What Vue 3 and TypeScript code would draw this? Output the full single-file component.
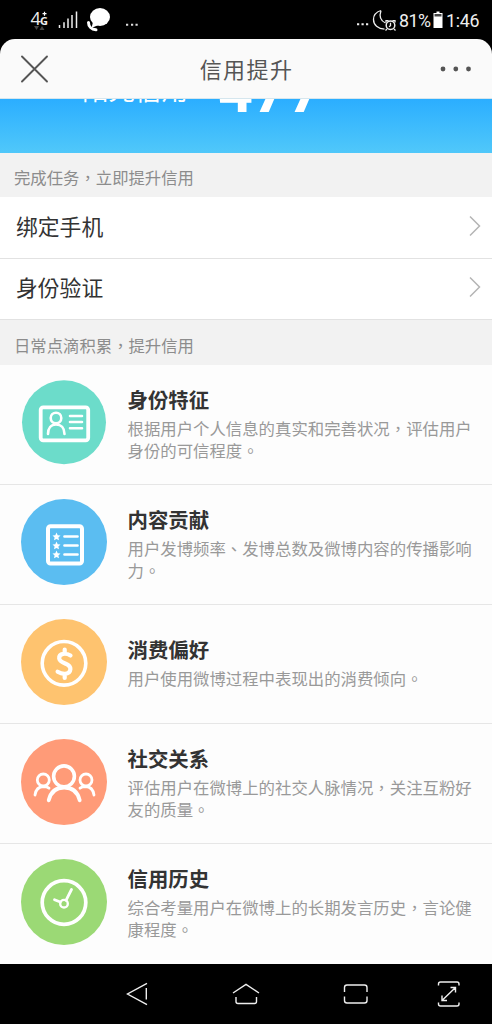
<script setup lang="ts">
interface Factor {
  kind: 'identity' | 'content' | 'spend' | 'social' | 'history'
  title: string
  desc: string
}

const tasks: string[] = ['绑定手机', '身份验证']

const factors: Factor[] = [
  { kind: 'identity', title: '身份特征', desc: '根据用户个人信息的真实和完善状况，评估用户身份的可信程度。' },
  { kind: 'content', title: '内容贡献', desc: '用户发博频率、发博总数及微博内容的传播影响力。' },
  { kind: 'spend', title: '消费偏好', desc: '用户使用微博过程中表现出的消费倾向。' },
  { kind: 'social', title: '社交关系', desc: '评估用户在微博上的社交人脉情况，关注互粉好友的质量。' },
  { kind: 'history', title: '信用历史', desc: '综合考量用户在微博上的长期发言历史，言论健康程度。' },
]
</script>

<template>
  <div class="phone">
    <div class="status">
      <svg class="status-left" width="150" height="40" viewBox="0 0 150 40" fill="none">
        <text x="30.5" y="24.5" class="net">4</text>
        <text x="40" y="24.5" class="net-g">G</text>
        <path d="M42.5 13.7h4M44.5 11.7v4" stroke="#fff" stroke-width="1.2" />
        <path d="M34 26h5l-2.500 4zM39.500 30h5l-2.500-4z" fill="#444" />
        <path d="M59.500 25v3M64 22.300v5.700M68 18.500V28M72 15v13M76.500 11.500V28" stroke="#eee" stroke-width="1.5" />
        <ellipse cx="100" cy="17" rx="10" ry="9" fill="#fff" />
        <path d="M93 22l-1.500 6 7-3z" fill="#fff" />
        <path d="M88.500 22.500c0 4 3 7 7.500 7.300" stroke="#fff" stroke-width="3" stroke-linecap="round" />
        <path d="M126 24.800h2.200M131 24.800h2.200M135.500 24.800h2.200" stroke="#ddd" stroke-width="2" />
      </svg>
      <div class="status-right">
        <svg width="44" height="40" viewBox="0 0 44 40" fill="none" stroke="#eee">
          <path d="M2 24.300h2.200M6.500 24.300h2.200M11 24.300h2.200" stroke-width="2" />
          <path d="M26 10.500c-5 1.500-7.500 5-7.500 9 0 5.500 4.500 9.300 11 9.700M26 10.500c-2 6 0 10.500 4.500 12.500" stroke-width="1.300" />
          <circle cx="35.500" cy="25.300" r="4.300" stroke-width="1.500" />
          <path d="M35.500 22.700v3l-1.500 1M31 22.500v-1.800h2.500M40 22.500v-1.800h-2.500M32 29l-1.500 1.500M39 29l1.500 1.500" stroke-width="1.300" />
        </svg>
        <span class="pct">81%</span>
        <svg class="battery" width="10" height="40" viewBox="0 0 10 40">
          <path d="M3.500 11.500h3v1.500H9.500V28H.5V13h3z" fill="#fff" />
          <path d="M1.500 14h7v2.500h-7z" fill="#444" />
        </svg>
        <span class="time">1:46</span>
      </div>
    </div>

    <header class="bar">
      <svg class="close" width="30" height="30" viewBox="0 0 30 30" fill="none" stroke="#555" stroke-width="1.900" stroke-linecap="round">
        <path d="M2 2.500L27 27.500M27 2.500L2 27.500" />
      </svg>
      <h1>信用提升</h1>
      <svg class="more" width="32" height="6" viewBox="0 0 32 6" fill="#555">
        <circle cx="3" cy="3" r="2.400" /><circle cx="15.800" cy="3" r="2.400" /><circle cx="28.500" cy="3" r="2.400" />
      </svg>
    </header>

    <section class="score">
      <span class="score-name">阳光信用</span>
      <span class="score-value">477</span>
    </section>

    <h2 class="label">完成任务，立即提升信用</h2>
    <div v-for="task in tasks" :key="task" class="task">
      <span>{{ task }}</span>
      <svg width="12" height="22" viewBox="0 0 12 22" fill="none" stroke="#b5b5b5" stroke-width="1.500">
        <path d="M1 1.500L10.500 11L1 20.500" />
      </svg>
    </div>
    <h2 class="label second">日常点滴积累，提升信用</h2>

    <article v-for="factor in factors" :key="factor.kind" class="factor" :class="factor.kind">
      <svg class="icon" width="86" height="86" viewBox="0 0 86 86" fill="none" stroke="#fff" stroke-linecap="round">
        <template v-if="factor.kind === 'identity'">
          <circle class="disc" cx="43" cy="43.300" r="42" />
          <rect x="19.700" y="28.300" width="47.500" height="33" rx="2.500" stroke-width="3.800" />
          <circle cx="35" cy="39" r="5.300" stroke-width="2.600" />
          <path d="M27 55c0-6 3-9.500 8-9.500s8.500 3.500 8.500 9.500M49 37h12M49 43h12M49 49.200h12" stroke-width="2.600" />
        </template>
        <template v-else-if="factor.kind === 'content'">
          <circle class="disc" cx="43" cy="43" r="43" />
          <rect x="27" y="27.200" width="34" height="37.300" rx="2.500" stroke-width="4" />
          <path d="M43.500 37.500h13M43.500 46.500h13M43.500 55.500h13" stroke-width="2.700" />
          <path v-for="y in [37.500, 46.500, 55.500]" :key="y" class="star" :transform="`translate(35.500 ${y})`" d="M0-4L1.200-1.300 4-1 1.900 1 2.500 3.800 0 2.400-2.500 3.800-1.900 1-4-1-1.200-1.300z" />
        </template>
        <template v-else-if="factor.kind === 'spend'">
          <circle class="disc" cx="43" cy="43" r="43" />
          <circle cx="43" cy="44.300" r="21.800" stroke-width="3.600" />
          <path d="M49.500 36.500c-2.500-1.500-5-2-7.300-1.600-2.700.5-4.200 2.300-4 4.500.3 3 3.300 4 6 5.100 3.200 1.300 5.400 2.700 5.200 5.700-.2 2.800-2.300 4.500-5.500 4.600-2.800.1-5-.7-7.300-2.100M43.700 30.500v4M43.700 55v4" stroke-width="4.200" />
        </template>
        <template v-else-if="factor.kind === 'social'">
          <circle class="disc" cx="43" cy="43" r="43" />
          <circle cx="43" cy="37.300" r="10.400" stroke-width="3.600" />
          <path d="M27.700 61.300c2-8.300 7.500-12.800 15.500-12.800s13.500 4.500 15.500 12.800" stroke-width="3.800" />
          <circle cx="22.300" cy="41" r="6" stroke-width="2.800" />
          <circle cx="65" cy="41" r="6" stroke-width="2.800" />
          <path d="M14 56c.7-5 3.500-8.300 8.500-8.500 2.300 0 4 .5 5.500 1.700M73 56c-.7-5-3.500-8.300-8.500-8.500-2.300 0-4 .5-5.500 1.700" stroke-width="2.800" />
        </template>
        <template v-else>
          <circle class="disc" cx="43" cy="43" r="43" />
          <circle cx="43" cy="43.500" r="21.800" stroke-width="3.700" />
          <circle cx="43" cy="44.700" r="3.800" stroke-width="2.400" />
          <path d="M45 41.300L50.500 30.500M39.300 43L33.500 40.700" stroke-width="2.800" />
        </template>
      </svg>
      <div class="copy">
        <h3>{{ factor.title }}</h3>
        <p>{{ factor.desc }}</p>
      </div>
    </article>

    <nav class="nav">
      <svg width="492" height="60" viewBox="0 0 492 60" fill="none" stroke="#eee" stroke-width="1.400">
        <path d="M147 19.300L127.500 30L147 40.700M146.300 24v11.500" />
        <path d="M233 29L246 20.300L259 29M236 33v4.500q0 2 2 2h16.500q2 0 2-2V33" />
        <path d="M344.500 28v-4.500q0-2.500 2.500-2.500h17.500q2.500 0 2.500 2.500V28M344.500 32.500V36.500q0 2.500 2.500 2.500h17.500q2.500 0 2.500-2.500v-4" />
        <path d="M438.500 21.500v-1.500q0-2 2-2h16.500q2 0 2 2v1.500M438.500 38.500v1.500q0 2 2 2h16.500q2 0 2-2v-1.500M442 36.500L455.500 23.500M450.500 23.500h5v5M442 31.500v5h5" />
      </svg>
    </nav>
  </div>
</template>

<style>
html, body { margin: 0; background: #000; }
</style>

<style scoped>
.phone {
  width: 492px;
  height: 1024px;
  overflow: hidden;
  display: flex;
  flex-direction: column;
  background: #000;
  font-family: "Noto Sans CJK TC", "Noto Sans CJK SC", sans-serif;
}
h1, h2, h3, p { margin: 0; font-weight: 400; }
svg { display: block; flex: none; }
.status { height: 39px; flex: none; display: flex; justify-content: space-between; color: #eee; }
.net { font: 18px "Open Sans", sans-serif; fill: #eee; }
.net-g { font: bold 11px "Open Sans", sans-serif; fill: #eee; }
.status-right { display: flex; font: 17.800px/41px Roboto, sans-serif; padding-right: 15px; }
.pct { width: 33px; letter-spacing: -.5px; }
.battery { margin-left: 1px; }
.time { margin-left: 3px; width: 31px; letter-spacing: -.3px; }
.bar {
  box-sizing: border-box;
  height: 60px;
  flex: none;
  display: flex;
  align-items: center;
  justify-content: space-between;
  padding: 0 20px;
  border-bottom: 1px solid #d5e6ee;
  border-radius: 15px 15px 0 0;
  background: #fafafa;
}
.bar h1 { font-size: 22px; letter-spacing: 1.400px; color: #555; line-height: 30px; margin: 0 0 1px 3px; }
.score {
  height: 54px;
  flex: none;
  overflow: hidden;
  display: flex;
  align-items: flex-start;
  color: #fff;
  background: linear-gradient(#2baeff, #50c8fa);
}
.score-name { font-size: 26.500px; line-height: 30px; margin: -25px 0 0 82px; width: 136px; }
.score-value { font: bold 61px/60px Roboto, sans-serif; margin-top: -38px; }
.label {
  height: 44px;
  flex: none;
  padding-left: 14px;
  font-size: 16.360px;
  line-height: 49px;
  color: #8c8c8c;
  background: #f2f2f2;
}
.label.second { height: 45px; line-height: 51px; }
.task {
  box-sizing: border-box;
  height: 61.500px;
  flex: none;
  display: flex;
  align-items: center;
  justify-content: space-between;
  padding: 0 11.500px 3px 16px;
  border-bottom: 1px solid #e2e2e2;
  background: #fff;
  color: #333;
  font-size: 21.800px;
  line-height: 32px;
}
.factor {
  box-sizing: border-box;
  height: 119.750px;
  flex: none;
  display: flex;
  align-items: center;
  gap: 20.500px;
  padding: 0 0 4px 21px;
  border-bottom: 1.500px solid #e6e6e6;
  background: #fdfdfd;
}
.factor:last-of-type { border-bottom-color: #fdfdfd; }
.copy { width: 350px; }
.copy h3 { font-size: 20.400px; font-weight: 700; line-height: 30px; color: #333; }
.copy p { margin-top: 3px; font-size: 16.400px; line-height: 22px; color: #999; }
.disc { stroke: none; }
.identity .disc { fill: #6cdcca; }
.content .disc { fill: #5bbdf1; }
.spend .disc { fill: #fec36f; }
.social .disc { fill: #ff9b78; }
.history .disc { fill: #9bd975; }
.identity .icon, .content .icon, .spend .icon, .social .icon { margin-left: -.5px; margin-right: .5px; }
.history .icon { margin: 1px .5px 0 -.5px; }
.star { fill: #fff; stroke: none; }
.nav { height: 60px; flex: none; background: #000; }
</style>
